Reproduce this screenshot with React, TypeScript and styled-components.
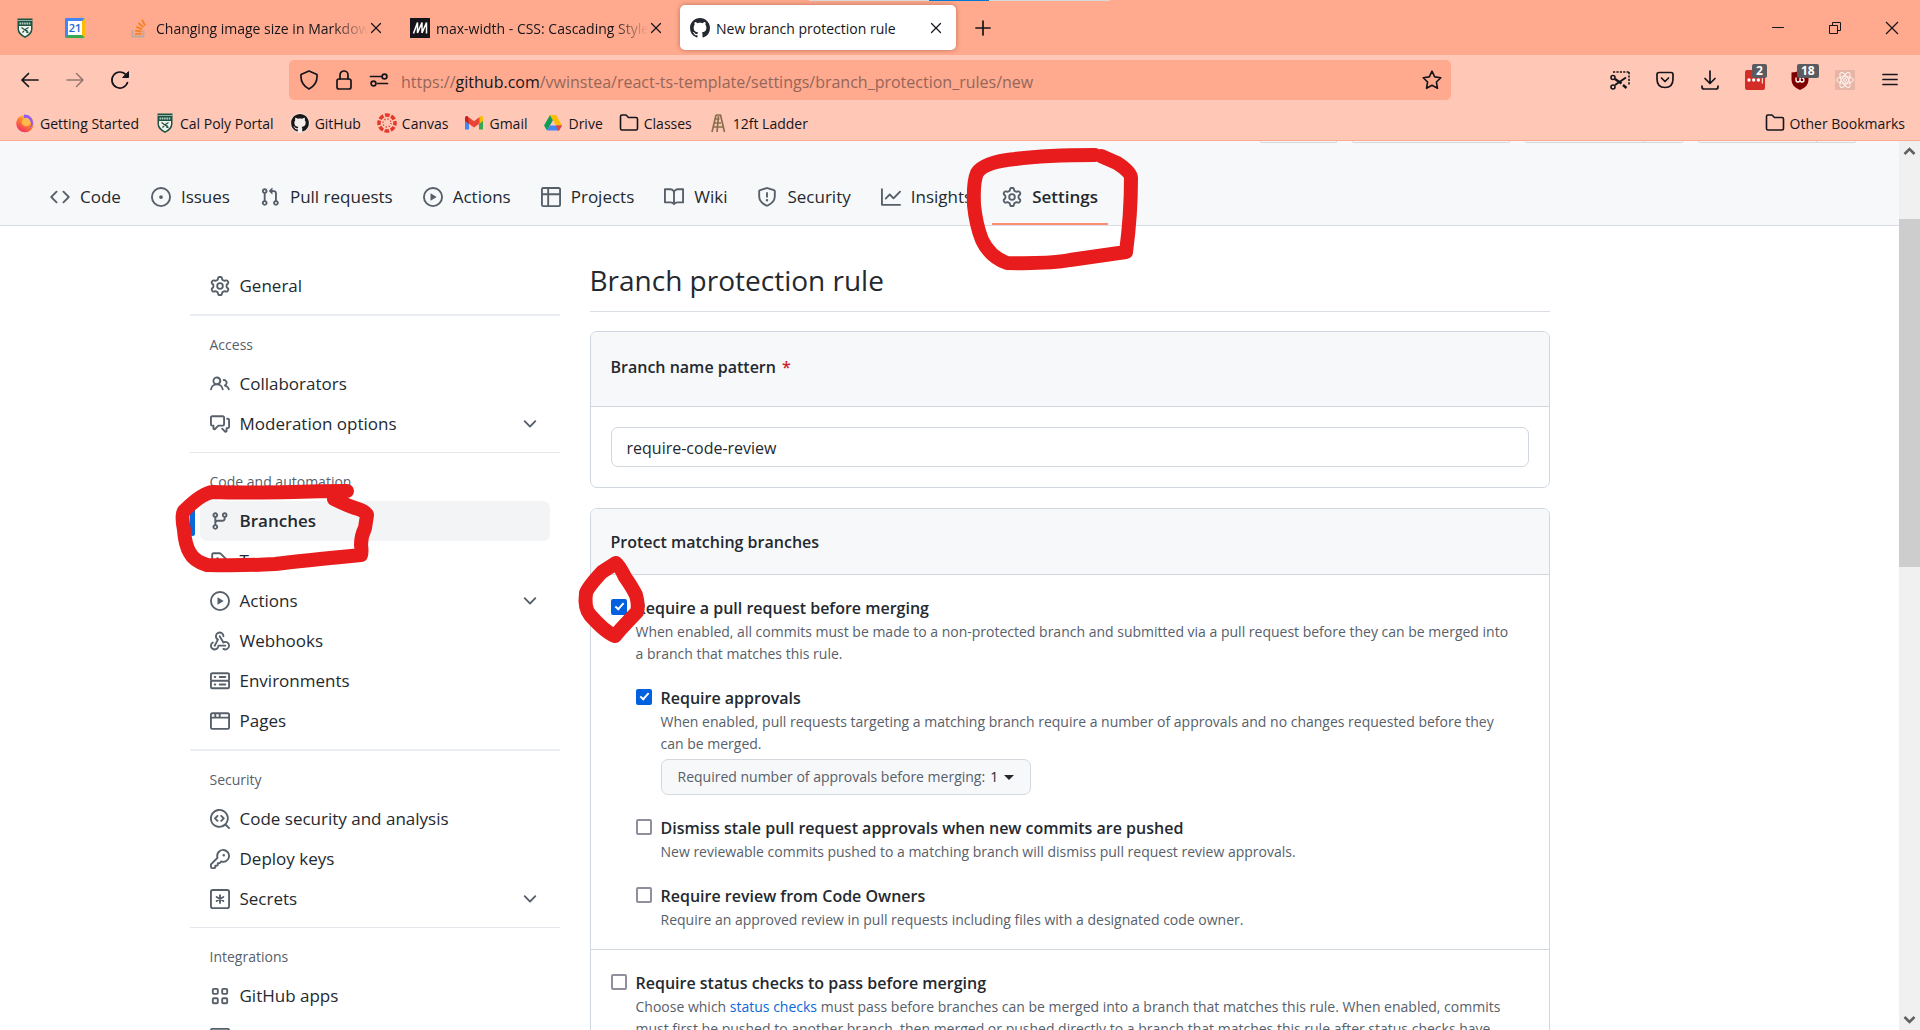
import React from "react";
import styled, { createGlobalStyle, css } from "styled-components";

const GlobalStyle = createGlobalStyle`
  *, *::before, *::after { box-sizing: border-box; }
  body { margin: 0; background: #fff; }
  body, button, input, select {
    font-family: "Open Sans", "Noto Sans", sans-serif;
  }
  a { color: inherit; text-decoration: none; }
  button { border: 0; padding: 0; background: none; color: inherit; }
  svg { display: block; flex: none; }
`;

/* ---------- octicons ---------- */

const octicons: Record<string, string> = {
  code: "m11.28 3.22 4.25 4.25a.75.75 0 0 1 0 1.06l-4.25 4.25a.749.749 0 0 1-1.275-.326.749.749 0 0 1 .215-.734L13.94 8l-3.72-3.72a.749.749 0 0 1 .326-1.275.749.749 0 0 1 .734.215Zm-6.56 0a.751.751 0 0 1 1.042.018.751.751 0 0 1 .018 1.042L2.06 8l3.72 3.72a.749.749 0 0 1-.326 1.275.749.749 0 0 1-.734-.215L.47 8.53a.75.75 0 0 1 0-1.06Z",
  issue: "M8 9.5a1.5 1.5 0 1 0 0-3 1.5 1.5 0 0 0 0 3ZM8 0a8 8 0 1 1 0 16A8 8 0 0 1 8 0ZM1.5 8a6.5 6.5 0 1 0 13 0 6.5 6.5 0 0 0-13 0Z",
  pull: "M1.5 3.25a2.25 2.25 0 1 1 3 2.122v5.256a2.251 2.251 0 1 1-1.5 0V5.372A2.25 2.25 0 0 1 1.5 3.25Zm5.677-.177L9.573.677A.25.25 0 0 1 10 .854V2.5h1A2.5 2.5 0 0 1 13.5 5v5.628a2.251 2.251 0 1 1-1.5 0V5a1 1 0 0 0-1-1h-1v1.646a.25.25 0 0 1-.427.177L7.177 3.427a.25.25 0 0 1 0-.354ZM3.75 2.5a.75.75 0 1 0 0 1.5.75.75 0 0 0 0-1.5Zm0 9.5a.75.75 0 1 0 0 1.5.75.75 0 0 0 0-1.5Zm8.25.75a.75.75 0 1 0 1.5 0 .75.75 0 0 0-1.5 0Z",
  play: "M8 0a8 8 0 1 1 0 16A8 8 0 0 1 8 0ZM1.5 8a6.5 6.5 0 1 0 13 0 6.5 6.5 0 0 0-13 0Zm4.879-2.773 4.264 2.559a.25.25 0 0 1 0 .428l-4.264 2.559A.25.25 0 0 1 6 10.559V5.442a.25.25 0 0 1 .379-.215Z",
  table: "M0 1.75C0 .784.784 0 1.75 0h12.5C15.216 0 16 .784 16 1.75v12.5A1.75 1.75 0 0 1 14.25 16H1.75A1.75 1.75 0 0 1 0 14.25ZM6.5 6.5v8h7.75a.25.25 0 0 0 .25-.25V6.5Zm8-1.5V1.75a.25.25 0 0 0-.25-.25H6.5V5Zm-13 1.5v7.75c0 .138.112.25.25.25H5v-8ZM5 5V1.5H1.75a.25.25 0 0 0-.25.25V5Z",
  book: "M0 1.75A.75.75 0 0 1 .75 1h4.253c1.227 0 2.317.59 3 1.501A3.743 3.743 0 0 1 11.006 1h4.245a.75.75 0 0 1 .75.75v10.5a.75.75 0 0 1-.75.75h-4.507a2.25 2.25 0 0 0-1.591.659l-.622.621a.75.75 0 0 1-1.06 0l-.622-.621A2.25 2.25 0 0 0 5.258 13H.75a.75.75 0 0 1-.75-.75Zm7.251 10.324.004-5.073-.002-2.253A2.25 2.25 0 0 0 5.003 2.5H1.5v9h3.757a3.75 3.75 0 0 1 1.994.574ZM8.755 4.75l-.004 7.322a3.752 3.752 0 0 1 1.992-.572H14.5v-9h-3.495a2.25 2.25 0 0 0-2.25 2.25Z",
  shield: "M7.467.133a1.748 1.748 0 0 1 1.066 0l5.25 1.68A1.75 1.75 0 0 1 15 3.48V7c0 1.566-.32 3.182-1.303 4.682-.983 1.498-2.585 2.813-5.032 3.855a1.697 1.697 0 0 1-1.33 0c-2.447-1.042-4.049-2.357-5.032-3.855C1.32 10.182 1 8.566 1 7V3.48a1.75 1.75 0 0 1 1.217-1.667Zm.61 1.429a.25.25 0 0 0-.153 0l-5.25 1.68a.25.25 0 0 0-.174.238V7c0 1.358.275 2.666 1.057 3.86.784 1.194 2.121 2.34 4.366 3.297a.196.196 0 0 0 .154 0c2.245-.956 3.582-2.104 4.366-3.298C13.225 9.666 13.5 8.36 13.5 7V3.48a.251.251 0 0 0-.174-.237l-5.25-1.68ZM8.75 4.75v3a.75.75 0 0 1-1.5 0v-3a.75.75 0 0 1 1.5 0ZM9 10.5a1 1 0 1 1-2 0 1 1 0 0 1 2 0Z",
  graph: "M1.5 1.75V13.5h13.75a.75.75 0 0 1 0 1.5H.75a.75.75 0 0 1-.75-.75V1.75a.75.75 0 0 1 1.5 0Zm14.28 2.53-5.25 5.25a.75.75 0 0 1-1.06 0L7 7.06 4.28 9.78a.751.751 0 0 1-1.042-.018.751.751 0 0 1-.018-1.042l3.25-3.25a.75.75 0 0 1 1.06 0L10 7.94l4.72-4.72a.751.751 0 0 1 1.042.018.751.751 0 0 1 .018 1.042Z",
  gear: "M8 0a8.2 8.2 0 0 1 .701.031C9.444.095 9.99.645 10.16 1.29l.288 1.107c.018.066.079.158.212.224.231.114.454.243.668.386.123.082.233.09.299.071l1.103-.303c.644-.176 1.392.021 1.82.63.27.385.506.792.704 1.218.315.675.111 1.422-.364 1.891l-.814.806c-.049.048-.098.147-.088.294.016.257.016.515 0 .772-.01.147.038.246.088.294l.814.806c.475.469.679 1.216.364 1.891a7.977 7.977 0 0 1-.704 1.217c-.428.61-1.176.807-1.82.63l-1.102-.302c-.067-.019-.177-.011-.3.071a5.909 5.909 0 0 1-.668.386c-.133.066-.194.158-.211.224l-.29 1.106c-.168.646-.715 1.196-1.458 1.26a8.006 8.006 0 0 1-1.402 0c-.743-.064-1.289-.614-1.458-1.26l-.289-1.106c-.018-.066-.079-.158-.212-.224a5.738 5.738 0 0 1-.668-.386c-.123-.082-.233-.09-.299-.071l-1.103.303c-.644.176-1.392-.021-1.82-.63a8.12 8.12 0 0 1-.704-1.218c-.315-.675-.111-1.422.363-1.891l.815-.806c.05-.048.098-.147.088-.294a6.214 6.214 0 0 1 0-.772c.01-.147-.038-.246-.088-.294l-.815-.806C.635 6.045.431 5.298.746 4.623a7.92 7.92 0 0 1 .704-1.217c.428-.61 1.176-.807 1.82-.63l1.102.302c.067.019.177.011.3-.071.214-.143.437-.272.668-.386.133-.066.194-.158.211-.224l.29-1.106C6.009.645 6.556.095 7.299.03 7.53.01 7.764 0 8 0Zm-.571 1.525c-.036.003-.108.036-.137.146l-.289 1.105c-.147.561-.549.967-.998 1.189-.173.086-.34.183-.5.29-.417.278-.97.423-1.529.27l-1.103-.303c-.109-.03-.175.016-.195.045-.22.312-.412.644-.573.99-.014.031-.021.11.059.19l.815.806c.411.406.562.957.53 1.456a4.709 4.709 0 0 0 0 .582c.032.499-.119 1.05-.53 1.456l-.815.806c-.081.08-.073.159-.059.19.162.346.353.677.573.989.02.03.085.076.195.046l1.102-.303c.56-.153 1.113-.008 1.53.27.161.107.328.204.501.29.447.222.85.629.997 1.189l.289 1.105c.029.109.101.143.137.146a6.6 6.6 0 0 0 1.142 0c.036-.003.108-.036.137-.146l.289-1.105c.147-.561.549-.967.998-1.189.173-.086.34-.183.5-.29.417-.278.97-.423 1.529-.27l1.103.303c.109.029.175-.016.195-.045.22-.313.411-.644.573-.99.014-.031.021-.11-.059-.19l-.815-.806c-.411-.406-.562-.957-.53-1.456a4.709 4.709 0 0 0 0-.582c-.032-.499.119-1.05.53-1.456l.815-.806c.081-.08.073-.159.059-.19a6.464 6.464 0 0 0-.573-.989c-.02-.03-.085-.076-.195-.046l-1.102.303c-.56.153-1.113.008-1.53-.27a4.44 4.44 0 0 0-.501-.29c-.447-.222-.85-.629-.997-1.189l-.289-1.105c-.029-.11-.101-.143-.137-.146a6.6 6.6 0 0 0-1.142 0ZM11 8a3 3 0 1 1-6 0 3 3 0 0 1 6 0ZM9.5 8a1.5 1.5 0 1 0-3.001.001A1.5 1.5 0 0 0 9.5 8Z",
  people: "M2 5.5a3.5 3.5 0 1 1 5.898 2.549 5.508 5.508 0 0 1 3.034 4.084.75.75 0 1 1-1.482.235 4 4 0 0 0-7.9 0 .75.75 0 0 1-1.482-.236A5.507 5.507 0 0 1 3.102 8.05 3.493 3.493 0 0 1 2 5.5ZM11 4a3.001 3.001 0 0 1 2.22 5.018 5.01 5.01 0 0 1 2.56 3.012.749.749 0 0 1-.885.954.752.752 0 0 1-.549-.514 3.507 3.507 0 0 0-2.522-2.372.75.75 0 0 1-.574-.73v-.352a.75.75 0 0 1 .416-.672A1.5 1.5 0 0 0 11 5.5.75.75 0 0 1 11 4Zm-5.5-.5a2 2 0 1 0-.001 3.999A2 2 0 0 0 5.5 3.5Z",
  discussion: "M1.75 1h8.5c.966 0 1.75.784 1.75 1.75v5.5A1.75 1.75 0 0 1 10.25 10H7.061l-2.574 2.573A1.458 1.458 0 0 1 2 11.543V10h-.25A1.75 1.75 0 0 1 0 8.25v-5.5C0 1.784.784 1 1.75 1ZM1.5 2.75v5.5c0 .138.112.25.25.25h1a.75.75 0 0 1 .75.75v2.19l2.72-2.72a.749.749 0 0 1 .53-.22h3.5a.25.25 0 0 0 .25-.25v-5.5a.25.25 0 0 0-.25-.25h-8.5a.25.25 0 0 0-.25.25Zm13 2a.25.25 0 0 0-.25-.25h-.5a.75.75 0 0 1 0-1.5h.5c.966 0 1.75.784 1.75 1.75v5.5A1.75 1.75 0 0 1 14.25 12H14v1.543a1.458 1.458 0 0 1-2.487 1.03L9.22 12.28a.749.749 0 0 1 .326-1.275.749.749 0 0 1 .734.215l2.22 2.22v-2.19a.75.75 0 0 1 .75-.75h1a.25.25 0 0 0 .25-.25Z",
  branch: "M9.5 3.25a2.25 2.25 0 1 1 3 2.122V6A2.5 2.5 0 0 1 10 8.5H6a1 1 0 0 0-1 1v1.128a2.251 2.251 0 1 1-1.5 0V5.372a2.25 2.25 0 1 1 1.5 0v1.836A2.493 2.493 0 0 1 6 7h4a1 1 0 0 0 1-1v-.628A2.25 2.25 0 0 1 9.5 3.25Zm-6 0a.75.75 0 1 0 1.5 0 .75.75 0 0 0-1.5 0Zm8.25-.75a.75.75 0 1 0 0 1.5.75.75 0 0 0 0-1.5ZM4.25 12a.75.75 0 1 0 0 1.5.75.75 0 0 0 0-1.5Z",
  tag: "M1 7.775V2.75C1 1.784 1.784 1 2.75 1h5.025c.464 0 .91.184 1.238.513l6.25 6.25a1.75 1.75 0 0 1 0 2.474l-5.026 5.026a1.75 1.75 0 0 1-2.474 0l-6.25-6.25A1.752 1.752 0 0 1 1 7.775Zm1.5 0c0 .066.026.13.073.177l6.25 6.25a.25.25 0 0 0 .354 0l5.025-5.025a.25.25 0 0 0 0-.354l-6.25-6.25a.25.25 0 0 0-.177-.073H2.75a.25.25 0 0 0-.25.25ZM6 5a1 1 0 1 1 0 2 1 1 0 0 1 0-2Z",
  webhook: "M5.5 4.25a2.25 2.25 0 0 1 4.5 0 .75.75 0 0 0 1.5 0 3.75 3.75 0 1 0-6.14 2.889l-2.272 4.258a.75.75 0 0 0 1.324.706L7 7.25a.75.75 0 0 0-.309-1.015A2.25 2.25 0 0 1 5.5 4.25Z M7.364 3.607a.75.75 0 0 1 1.03.257l2.608 4.349a3.75 3.75 0 1 1-.628 6.785.75.75 0 0 1 .752-1.299 2.25 2.25 0 1 0-.033-3.88.75.75 0 0 1-1.03-.256L7.107 4.636a.75.75 0 0 1 .257-1.03Z M2.9 8.776A.75.75 0 0 1 2.625 9.8 2.25 2.25 0 1 0 6 11.75a.75.75 0 0 1 .75-.751h5.5a.75.75 0 0 1 0 1.5H7.425a3.751 3.751 0 1 1-5.55-3.998.75.75 0 0 1 1.024.274Z",
  server: "M1.75 1h12.5c.966 0 1.75.784 1.75 1.75v4c0 .372-.116.717-.314 1 .198.283.314.628.314 1v4a1.75 1.75 0 0 1-1.75 1.75H1.75A1.75 1.75 0 0 1 0 12.75v-4c0-.358.109-.707.314-1a1.739 1.739 0 0 1-.314-1v-4C0 1.784.784 1 1.75 1ZM1.5 2.75v4c0 .138.112.25.25.25h12.5a.25.25 0 0 0 .25-.25v-4a.25.25 0 0 0-.25-.25H1.75a.25.25 0 0 0-.25.25Zm.25 5.75a.25.25 0 0 0-.25.25v4c0 .138.112.25.25.25h12.5a.25.25 0 0 0 .25-.25v-4a.25.25 0 0 0-.25-.25ZM7 4.75A.75.75 0 0 1 7.75 4h4.5a.75.75 0 0 1 0 1.5h-4.5A.75.75 0 0 1 7 4.75ZM7.75 10h4.5a.75.75 0 0 1 0 1.5h-4.5a.75.75 0 0 1 0-1.5ZM3 4.75A.75.75 0 0 1 3.75 4h.5a.75.75 0 0 1 0 1.5h-.5A.75.75 0 0 1 3 4.75ZM3.75 10h.5a.75.75 0 0 1 0 1.5h-.5a.75.75 0 0 1 0-1.5Z",
  browser: "M0 2.75C0 1.784.784 1 1.75 1h12.5c.966 0 1.75.784 1.75 1.75v10.5A1.75 1.75 0 0 1 14.25 15H1.75A1.75 1.75 0 0 1 0 13.25ZM14.5 6h-13v7.25c0 .138.112.25.25.25h12.5a.25.25 0 0 0 .25-.25Zm-6-3.5v2h6V2.75a.25.25 0 0 0-.25-.25ZM5 2.5v2h2v-2Zm-3.25 0a.25.25 0 0 0-.25.25V4.5h2v-2Z",
  codescan: "M8.47 4.97a.75.75 0 0 0 0 1.06L9.94 7.5 8.47 8.97a.75.75 0 1 0 1.06 1.06l2-2a.75.75 0 0 0 0-1.06l-2-2a.75.75 0 0 0-1.06 0ZM6.53 6.03a.75.75 0 0 0-1.06-1.06l-2 2a.75.75 0 0 0 0 1.06l2 2a.75.75 0 1 0 1.06-1.06L5.06 7.5l1.47-1.47Z M12.246 13.307a7.501 7.501 0 1 1 1.06-1.06l2.474 2.473a.749.749 0 0 1-.326 1.275.749.749 0 0 1-.734-.215ZM1.5 7.5a6.002 6.002 0 0 0 3.608 5.504 6.002 6.002 0 0 0 6.486-1.117.748.748 0 0 1 .292-.293A6 6 0 1 0 1.5 7.5Z",
  key: "M10.5 0a5.499 5.499 0 1 1-1.288 10.848l-.932.932a.749.749 0 0 1-.53.22H7v.75a.749.749 0 0 1-.22.53l-.5.5a.749.749 0 0 1-.53.22H5v.75a.749.749 0 0 1-.22.53l-.5.5a.749.749 0 0 1-.53.22h-2A1.75 1.75 0 0 1 0 14.25v-2c0-.199.079-.389.22-.53l4.932-4.932A5.5 5.5 0 0 1 10.5 0Zm-4 5.5c-.001.431.069.86.205 1.269a.75.75 0 0 1-.181.768L1.5 12.56v1.69c0 .138.112.25.25.25h1.69l.06-.06v-1.19a.75.75 0 0 1 .75-.75h1.19l.06-.06v-1.19a.75.75 0 0 1 .75-.75h1.19l1.023-1.025a.75.75 0 0 1 .768-.18A4 4 0 1 0 6.5 5.5ZM11 6a1 1 0 1 1 0-2 1 1 0 0 1 0 2Z",
  chevron: "M12.78 5.22a.749.749 0 0 1 0 1.06l-4.25 4.25a.749.749 0 0 1-1.06 0L3.22 6.28a.749.749 0 1 1 1.06-1.06L8 8.939l3.72-3.719a.749.749 0 0 1 1.06 0Z",
  github: "M8 0c4.42 0 8 3.58 8 8a8.013 8.013 0 0 1-5.45 7.59c-.4.08-.55-.17-.55-.38 0-.27.01-1.13.01-2.2 0-.75-.25-1.23-.54-1.48 1.78-.2 3.65-.88 3.65-3.95 0-.88-.31-1.59-.82-2.15.08-.2.36-1.02-.08-2.12 0 0-.67-.22-2.2.82-.64-.18-1.32-.27-2-.27-.68 0-1.36.09-2 .27-1.53-1.03-2.2-.82-2.2-.82-.44 1.1-.16 1.92-.08 2.12-.51.56-.82 1.28-.82 2.15 0 3.06 1.86 3.75 3.64 3.95-.23.2-.44.55-.51 1.07-.46.21-1.61.55-2.33-.66-.15-.24-.6-.83-1.23-.82-.67.01-.27.38.01.53.34.19.73.9.82 1.13.16.45.68 1.31 2.69.94 0 .67.01 1.3.01 1.49 0 .21-.15.45-.55.38A7.995 7.995 0 0 1 0 8c0-4.42 3.58-8 8-8Z",
};

function Octicon({ name, fill = "#57606a" }: { name: string; fill?: string }) {
  if (name === "asterisk")
    return (
      <svg width="20" height="20" viewBox="0 0 16 16" fill="none" stroke={fill} strokeWidth="1.5" strokeLinecap="round">
        <rect x=".75" y=".75" width="14.5" height="14.5" rx="1.5" />
        <path d="M8 4.9v6.2M5.3 6.4l5.4 3.2M10.7 6.4 5.3 9.6" />
      </svg>
    );
  if (name === "apps")
    return (
      <svg width="20" height="20" viewBox="0 0 16 16" fill="none" stroke={fill} strokeWidth="1.5">
        <rect x="2.25" y="2.25" width="4" height="4" rx=".8" />
        <rect x="9.75" y="2.25" width="4" height="4" rx=".8" />
        <rect x="2.25" y="9.75" width="4" height="4" rx=".8" />
        <rect x="9.75" y="9.75" width="4" height="4" rx=".8" />
      </svg>
    );
  if (name === "mail")
    return (
      <svg width="20" height="20" viewBox="0 0 16 16" fill="none" stroke={fill} strokeWidth="1.5">
        <rect x=".75" y="2.25" width="14.5" height="11.5" rx="1" />
        <path d="m1 5 7 4 7-4" />
      </svg>
    );
  return (
    <svg width="20" height="20" viewBox="0 0 16 16" fill={fill} fillRule="evenodd">
      <path d={octicons[name]} />
    </svg>
  );
}

/* ---------- browser icons ---------- */

const ink = "#15141a";
const line = { fill: "none", stroke: ink, strokeWidth: 1.7, strokeLinecap: "round", strokeLinejoin: "round" } as const;

const CalPoly = () => (
  <svg width="20" height="20" viewBox="0 0 20 20">
    <path d="M2.500.5h15V11q0 5.500-7.500 9Q2.500 16.500 2.500 11Z" fill="#1d5343" />
    <path d="M2.500 2.500h15" stroke="#c9dcd2" strokeWidth=".7" />
    <path d="M4.500 5.500h11" stroke="#b5cdc1" strokeWidth="1.800" strokeDasharray="1.600 .7" />
    <path d="M4 8h12v3.500q-.5 3.700-6 6.700-5.500-3-6-6.700Z" fill="#f2f5ee" />
    <path d="m6.500 9.500 7 5M13.500 9.500l-4 2.500M9 13l-1.500 1.500M12 12v3" stroke="#1d5343" strokeWidth="1.300" />
  </svg>
);

const CalendarTile = styled.span`
  display: grid;
  place-items: center;
  width: 20px;
  height: 20px;
  background: #fff;
  border: 3px solid #4285f4;
  border-right-color: #fbbc04;
  border-bottom-color: #34a853;
  border-radius: 2px;
  color: #1967d2;
  font-size: 11px;
  line-height: 14px;
  font-weight: 600;
`;

const StackOverflow = () => (
  <svg width="20" height="20" viewBox="0 0 20 20" fill="none" strokeWidth="1.800">
    <path d="M2.500 12v6.500h11V12" stroke="#bcaaa0" />
    <path d="M5 15.800h6.500M5.200 12.700l6.400.8M6.200 8.800l6 2.300M8.300 5l5.200 4M12 1.800l3.200 5.800" stroke="#f48024" />
  </svg>
);

const Mdn = () => (
  <svg width="20" height="20" viewBox="0 0 20 20">
    <path d="M0 0h20v20H0z" fill="#15141a" />
    <path d="m3.500 15.500 4-11v10.500l4.500-10.500v10.500M12 15 16.500 4.500v11" stroke="#fff" strokeWidth="1.500" fill="none" />
  </svg>
);

const GithubDot = () => (
  <svg width="20" height="20" viewBox="-1 -1 18 18">
    <circle cx="8" cy="8" r="8.700" fill="#f4efed" />
    <path d={octicons.github} fill="#191717" />
  </svg>
);

const Firefox = () => (
  <svg width="20" height="20" viewBox="0 0 20 20">
    <defs>
      <linearGradient id="fx" x1=".8" y1="0" x2=".2" y2="1">
        <stop offset="0" stopColor="#ffe14d" />
        <stop offset=".5" stopColor="#ff7a2f" />
        <stop offset="1" stopColor="#f0246e" />
      </linearGradient>
    </defs>
    <circle cx="10" cy="10.500" r="8.800" fill="url(#fx)" />
    <path d="M9 1.500c5 0 9 3 9 8.500 0 3-2 5-4.500 5.500 2-1 3-3 2.500-5.500C15.500 6.500 12 5 9 5Z" fill="#9059ff" />
    <circle cx="11" cy="9" r="4.300" fill="#ffb84d" />
  </svg>
);

const CanvasIcon = () => (
  <svg width="20" height="20" viewBox="0 0 20 20" fill="none" stroke="#e4392b">
    <circle cx="10" cy="10" r="8" strokeWidth="3.600" strokeDasharray="4.700 1.583" strokeDashoffset="2.300" />
    <circle cx="10" cy="10" r="4" strokeWidth="1.400" strokeDasharray="1.200 1.942" />
  </svg>
);

const Gmail = () => (
  <svg width="20" height="20" viewBox="0 0 20 20">
    <path d="M1 5v11.500h4V9Z" fill="#4285f4" />
    <path d="M19 5v11.500h-4V9Z" fill="#34a853" />
    <path d="M15 5.500V11l4-3V5c0-2-2-2.500-3-1.500Z" fill="#fbbc04" />
    <path d="M5 5.500V11L1 8V5c0-2 2-2.500 3-1.500Z" fill="#c5221f" />
    <path d="M4.500 4 10 8.200 15.500 4v6.500L10 14.500l-5.500-4Z" fill="#ea4335" />
  </svg>
);

const Drive = () => (
  <svg width="20" height="20" viewBox="0 0 20 20">
    <path d="M7 2 1 12.500 4 17.500 10 7Z" fill="#0f9d58" />
    <path d="M7 2h6l6 10.500h-6Z" fill="#fbbc04" />
    <path d="M7 12.500h12l-3 5H4Z" fill="#4285f4" />
    <path d="M16 17.500h-1.500L13 12.500h6Z" fill="#ea4335" />
  </svg>
);

const Folder = () => (
  <svg width="20" height="20" viewBox="0 0 20 20" {...line} strokeWidth="1.600">
    <path d="M1.500 15.500v-12Q1.500 2 3 2h4l2.500 2.500H17q1.500 0 1.500 1.500v9.500q0 1.500-1.500 1.500H3q-1.500 0-1.500-1.500Z" />
  </svg>
);

const Ladder = () => (
  <svg width="20" height="20" viewBox="0 0 20 20" fill="none" stroke="#8a6f4d" strokeWidth="1.700">
    <path d="M8 2 4 19M12.500 2 16.500 19M8 2h5M10.500 3 9 19M7 6h4.500M6 10h7M5.500 14h9" />
  </svg>
);

const icons = {
  back: <svg width="20" height="20" viewBox="0 0 20 20" {...line}><path d="M18 10H2M8.500 3.500 2 10l6.500 6.500" /></svg>,
  forward: <svg width="20" height="20" viewBox="0 0 20 20" {...line} strokeWidth="1.500" opacity=".45"><path d="M2 10h16M11.500 3.500 18 10l-6.500 6.500" /></svg>,
  reload: (
    <svg width="20" height="20" viewBox="0 0 20 20" {...line}>
      <path d="M17.500 12.500A8 8 0 1 1 16 4.800" />
      <path d="M18.500 2v5.500H13Z" fill={ink} strokeWidth="1" />
    </svg>
  ),
  shield: <svg width="20" height="20" viewBox="0 0 20 20" {...line}><path d="M10 1 18 4.500v2.500c0 5-2.500 9-8 12-5.500-3-8-7-8-12V4.500Z" /></svg>,
  lock: <svg width="20" height="20" viewBox="0 0 20 20" {...line}><rect x="3" y="9" width="14" height="10" rx="2" /><path d="M6 9V5a4 4 0 0 1 8 0v4" /></svg>,
  perms: <svg width="20" height="20" viewBox="0 0 20 20" {...line}><path d="M1.500 6.500h11M8.500 13.500h10" /><circle cx="15.500" cy="6.500" r="2.400" /><circle cx="4.500" cy="13.500" r="2.400" /></svg>,
  star: <svg width="20" height="20" viewBox="0 0 20 20" {...line} strokeWidth="1.600"><path d="m10 1.200 2.700 5.700 6.100.8-4.400 4.300 1.100 6.300-5.500-3-5.500 3 1.100-6.300L1.200 7.700l6.100-.8Z" /></svg>,
  scissors: (
    <svg width="20" height="20" viewBox="0 0 20 20" fill="none" stroke={ink} strokeWidth="1.600">
      <path d="M3 2h16M19 2v13" strokeDasharray="2.200 1.200" />
      <path d="m5 9 6.500 4.500M13 15l3.500 3" strokeWidth="2.400" />
      <path d="M16 7.500 5 15" strokeWidth="2" />
      <circle cx="3" cy="7.500" r="2" />
      <circle cx="3" cy="17" r="2" />
    </svg>
  ),
  pocket: <svg width="20" height="20" viewBox="0 0 20 20" {...line}><path d="M4 2.500h12q2 0 2 2V9q0 8.500-8 8.500T2 9V4.500q0-2 2-2Z" /><path d="m6.500 8 3.500 3.500L13.500 8" /></svg>,
  download: <svg width="20" height="20" viewBox="0 0 20 20" {...line}><path d="M10 1v12M5 8.500l5 5 5-5M2 16v1q0 2 2 2h12q2 0 2-2v-1" /></svg>,
  lastpass: (
    <svg width="20" height="20" viewBox="0 0 20 20">
      <rect width="20" height="20" rx="2" fill="#d32d27" />
      <g fill="#fff"><circle cx="4" cy="10" r="1.700" /><circle cx="8.700" cy="10" r="1.700" /><circle cx="13.400" cy="10" r="1.700" /><path d="M16.800 7h1v6.500h-1z" /></g>
    </svg>
  ),
  ublock: (
    <svg width="20" height="20" viewBox="0 0 20 20">
      <path d="M10 0q4 2.500 8.500 2.500V10q0 6.500-8.500 10-8.500-3.500-8.500-10V2.500Q6 2.500 10 0Z" fill="#800000" />
      <path d="M6 7.500V10q0 2 2 2t2-2V7.500M10 10q0 2 2 2t2-2-2-2.500-2 2.500" fill="none" stroke="#fff" strokeWidth="1.300" />
    </svg>
  ),
  react: (
    <svg width="20" height="20" viewBox="0 0 20 20">
      <rect width="20" height="20" rx="1" fill="#e6b5a5" />
      <g fill="none" stroke="#fff4ef" strokeWidth="1">
        <ellipse cx="10" cy="10" rx="8.500" ry="3.300" />
        <ellipse cx="10" cy="10" rx="8.500" ry="3.300" transform="rotate(60 10 10)" />
        <ellipse cx="10" cy="10" rx="8.500" ry="3.300" transform="rotate(120 10 10)" />
        <circle cx="10" cy="10" r="1.500" />
      </g>
    </svg>
  ),
  menu: <svg width="20" height="20" viewBox="0 0 20 20" {...line}><path d="M3 4.500h14M3 9.500h14M3 14.500h14" /></svg>,
  plus: <svg width="20" height="20" viewBox="0 0 20 20" {...line}><path d="M10 3v14M3 10h14" /></svg>,
  close: <svg width="20" height="20" viewBox="0 0 20 20" {...line} strokeWidth="1.200"><path d="m5.500 5.500 9 9M14.500 5.500l-9 9" /></svg>,
  minimize: <svg width="20" height="20" viewBox="0 0 20 20" {...line} strokeWidth="1"><path d="M4.500 9.500h11" /></svg>,
  restore: <svg width="20" height="20" viewBox="0 0 20 20" fill="none" stroke={ink}><path d="M4.500 7.500h8v8h-8zM7.500 7.500v-3h8v8h-3" /></svg>,
  quit: <svg width="20" height="20" viewBox="0 0 20 20" fill="none" stroke={ink} strokeWidth="1.200"><path d="m4 4 12 12M16 4 4 16" /></svg>,
};

/* ---------- browser chrome ---------- */

const Window = styled.div`
  position: relative;
  display: flex;
  flex-direction: column;
  height: 100vh;
  overflow: hidden;
`;

const TabStrip = styled.header`
  display: flex;
  align-items: center;
  height: 55px;
  padding-right: 18px;
  background: #ffaa8e;
  color: ${ink};
`;

const PinnedTab = styled.button`
  display: grid;
  place-items: center;
  width: 50px;
  height: 45px;
`;

const TabList = styled.div`
  display: flex;
  gap: 4px;
  margin-left: 20px;
`;

const Tab = styled.div<{ $active?: boolean }>`
  display: flex;
  align-items: center;
  gap: 6px;
  width: 276px;
  height: 45px;
  padding: 0 10px;
  border-radius: 5px;
  ${(p) =>
    p.$active &&
    css`
      background: #fff;
      box-shadow: 0 0 5px rgba(120, 50, 30, 0.5);
    `}
`;

const TabTitle = styled.span<{ $fade?: boolean }>`
  flex: 1;
  min-width: 0;
  padding-top: 2px;
  overflow: hidden;
  white-space: nowrap;
  font-size: 14px;
  line-height: 20px;
  ${(p) =>
    p.$fade &&
    css`
      mask-image: linear-gradient(to left, transparent, #000 36px);
    `}
`;

const TabClose = styled.button`
  margin-left: -8px;
`;

const NewTab = styled.button`
  margin-left: 17px;
`;

const WindowControls = styled.div`
  display: flex;
  gap: 37px;
  margin-left: auto;
`;

const Toolbar = styled.div`
  display: flex;
  align-items: center;
  height: 50px;
  padding: 0 20px;
  background: #ffc8b6;
`;

const NavButtons = styled.div`
  display: flex;
  gap: 25px;
`;

const AddressBar = styled.form`
  display: flex;
  align-items: center;
  gap: 15px;
  flex: 1 1 0;
  max-width: 1162px;
  height: 40px;
  margin-left: 159px;
  padding: 0 9px 0 10px;
  background: #ffaa8e;
  border-radius: 5px;
`;

const Address = styled.a`
  flex: 1;
  margin-left: -3px;
  padding-top: 3px;
  overflow: hidden;
  white-space: nowrap;
  font-size: 16px;
  line-height: 24px;
  color: #94665a;
`;

const Host = styled.span`
  color: ${ink};
`;

const Extensions = styled.div`
  display: flex;
  gap: 25px;
  margin-left: auto;
`;

const ToolButton = styled.button`
  position: relative;
`;

const Badge = styled.span`
  position: absolute;
  left: 7px;
  bottom: 12px;
  padding: 0 4px;
  background: #5b5b5f;
  border-radius: 2px;
  color: #fff;
  font-size: 12px;
  line-height: 14px;
  font-weight: 700;
`;

const Bookmarks = styled.nav`
  display: flex;
  align-items: center;
  gap: 16px;
  height: 36px;
  padding: 0 15px;
  background: #ffc8b6;
  border-bottom: 1px solid #ffaa8e;
  color: ${ink};
`;

const Bookmark = styled.a<{ $last?: boolean }>`
  display: flex;
  align-items: center;
  gap: 5px;
  font-size: 14px;
  line-height: 20px;
  white-space: nowrap;
  ${(p) => p.$last && "margin-left: auto;"}
`;

const BookmarkName = styled.span`
  padding-top: 2px;
`;

const TopGrip = styled.div`
  position: absolute;
  top: 0;
  left: 809px;
  width: 301px;
  height: 1px;
  background: linear-gradient(to right, #d9d9d9 120px, #0078d7 120px, #0078d7 180px, #d9d9d9 180px);
`;

const Viewport = styled.div`
  display: flex;
  flex: 1;
  min-height: 0;
`;

const Page = styled.div`
  flex: 1;
  min-width: 0;
  overflow: hidden;
  color: #24292f;
`;

const Scrollbar = styled.div`
  display: flex;
  flex-direction: column;
  align-items: center;
  justify-content: space-between;
  width: 21px;
  padding: 0 0 2px;
  background: #f0f0f0;
`;

const Thumb = styled.div`
  width: 21px;
  height: 348px;
  margin: 58px 0 auto;
  background: #cdcdcd;
`;

/* ---------- repository header ---------- */

const RepoHeader = styled.header`
  background: #f6f8fa;
  border-bottom: 1px solid #d8dee4;
`;

const ActionStubs = styled.div`
  display: flex;
  justify-content: flex-end;
  gap: 15px;
  height: 2px;
  padding-right: 43px;
`;

const Stub = styled.div<{ $width: number; $split?: boolean }>`
  display: flex;
  justify-content: flex-end;
  width: ${(p) => p.$width}px;
  border: 1px solid #d5d8da;
  border-top: 0;
  border-radius: 0 0 6px 6px;
  &::after {
    content: "";
    width: ${(p) => (p.$split ? 39 : 0)}px;
    border-left: ${(p) => (p.$split ? 1 : 0)}px solid #d5d8da;
  }
`;

const RepoNav = styled.nav`
  display: flex;
  gap: 10px;
  padding: 22px 40px 0;
`;

const RepoTab = styled.a<{ $active?: boolean }>`
  display: flex;
  align-items: flex-start;
  gap: 10px;
  height: 60px;
  padding: 20px 10px 0;
  font-size: 17px;
  line-height: 24px;
  font-weight: ${(p) => (p.$active ? 600 : 400)};
  border-bottom: 2px solid ${(p) => (p.$active ? "#fd8c73" : "transparent")};
  svg { margin-top: 2px; }
`;

/* ---------- settings layout ---------- */

const Layout = styled.div`
  display: grid;
  grid-template-columns: 370px minmax(0, 960px);
  gap: 30px;
  max-width: 1600px;
  margin: 0 auto;
  padding: 32px 40px;
`;

const Sidebar = styled.nav`
  padding-top: 8px;
`;

const SideSection = styled.section`
  margin-top: 8px;
  border-top: 1px solid #e4e8ec;
  &:nth-of-type(odd) { border-top: 2px solid #eaeef2; }
`;

const SideHeading = styled.h2`
  margin: 0;
  padding: 19px 20px 9px;
  font-size: 14px;
  line-height: 20px;
  font-weight: 400;
  color: #57606a;
`;

const SideItem = styled.a<{ $active?: boolean }>`
  position: relative;
  display: flex;
  align-items: center;
  gap: 10px;
  height: 40px;
  margin: 0 10px;
  padding: 0 10px;
  border-radius: 7px;
  font-size: 17px;
  line-height: 24px;
  ${(p) =>
    p.$active &&
    css`
      background: #f3f4f6;
      font-weight: 600;
      &::before {
        content: "";
        position: absolute;
        left: -10px;
        top: 5px;
        width: 5px;
        height: 30px;
        border-radius: 7px;
        background: #0969da;
      }
    `}
  svg:nth-of-type(2) { margin-left: auto; }
`;

const PageTitle = styled.h1`
  margin: 0 0 19px;
  padding-bottom: 9px;
  border-bottom: 1px solid #d8dee4;
  font-size: 28px;
  line-height: 44px;
  font-weight: 400;
`;

const Box = styled.section`
  margin-bottom: 20px;
  border: 1px solid #d0d7de;
  border-radius: 7px;
`;

const BoxHeader = styled.div<{ $tall?: boolean }>`
  padding: ${(p) => (p.$tall ? "22px 20px 26px" : "20px 20px 19px")};
  background: #f6f8fa;
  border-bottom: 1px solid #d0d7de;
  border-radius: 6px 6px 0 0;
  font-size: 16px;
  line-height: 26px;
  font-weight: 600;
`;

const Required = styled.span`
  margin-left: 2px;
  color: #cf222e;
`;

const BoxTitle = styled.h2`
  margin: 0;
  font: inherit;
`;

const BoxBody = styled.div`
  padding: 20px;
`;

const TextInput = styled.input`
  display: block;
  width: 100%;
  height: 40px;
  padding: 2px 15px 0;
  border: 1px solid #d0d7de;
  border-radius: 7px;
  font-size: 16px;
  line-height: 24px;
  color: #24292f;
  outline: 0;
`;

const RuleGroup = styled.div`
  padding: 20px 20px 18px;
  & + & { border-top: 1px solid #d0d7de; }
`;

const Rule = styled.div`
  display: flex;
  align-items: flex-start;
  gap: 9px;
`;

const SubRules = styled.div`
  display: grid;
  gap: 20px;
  margin-top: 20px;
`;

const Checkbox = styled.input`
  appearance: none;
  flex: none;
  width: 16px;
  height: 16px;
  margin: 4px 0 0;
  border: 2px solid #8f8f9d;
  border-radius: 2px;
  background: #fff;
  &:checked {
    border-color: #0060df;
    background: #0060df;
  }
  &:checked::after {
    content: "";
    display: block;
    width: 5px;
    height: 9px;
    margin: 0 0 0 4px;
    border: solid #fff;
    border-width: 0 2px 2px 0;
    transform: rotate(42deg);
  }
`;

const RuleText = styled.div`
  flex: 1;
  min-width: 0;
`;

const RuleLabel = styled.label`
  display: block;
  font-size: 16px;
  line-height: 26px;
  font-weight: 600;
`;

const RuleNote = styled.p`
  margin: 0;
  padding-right: 16px;
  font-size: 14px;
  line-height: 22px;
  color: #57606a;
`;

const NoteLink = styled.a`
  color: #0969da;
`;

const ApprovalPicker = styled.label`
  display: inline-flex;
  align-items: center;
  gap: 5px;
  height: 36px;
  margin-top: 4px;
  padding: 0 16px;
  background: #f6f8fa;
  border: 1px solid #d5d9dd;
  border-radius: 7px;
  font-size: 14px;
  line-height: 24px;
  color: #57606a;
  vertical-align: top;
`;

const ApprovalCount = styled.select`
  appearance: none;
  border: 0;
  padding: 0;
  background: none;
  font-size: 14px;
  line-height: 24px;
  color: #24292f;
`;

const Markup = styled.svg`
  position: absolute;
  top: 0;
  left: 0;
  pointer-events: none;
`;

/* ---------- data ---------- */

const repoTabs: [string, string][] = [
  ["code", "Code"],
  ["issue", "Issues"],
  ["pull", "Pull requests"],
  ["play", "Actions"],
  ["table", "Projects"],
  ["book", "Wiki"],
  ["shield", "Security"],
  ["graph", "Insights"],
  ["gear", "Settings"],
];

const bookmarks: [React.ReactNode, string][] = [
  [<Firefox />, "Getting Started"],
  [<CalPoly />, "Cal Poly Portal"],
  [<GithubDot />, "GitHub"],
  [<CanvasIcon />, "Canvas"],
  [<Gmail />, "Gmail"],
  [<Drive />, "Drive"],
  [<Folder />, "Classes"],
  [<Ladder />, "12ft Ladder"],
];

type Item = { icon: string; text: string; menu?: boolean; active?: boolean };

const sections: { title: string; items: Item[] }[] = [
  {
    title: "Access",
    items: [
      { icon: "people", text: "Collaborators" },
      { icon: "discussion", text: "Moderation options", menu: true },
    ],
  },
  {
    title: "Code and automation",
    items: [
      { icon: "branch", text: "Branches", active: true },
      { icon: "tag", text: "Tags" },
      { icon: "play", text: "Actions", menu: true },
      { icon: "webhook", text: "Webhooks" },
      { icon: "server", text: "Environments" },
      { icon: "browser", text: "Pages" },
    ],
  },
  {
    title: "Security",
    items: [
      { icon: "codescan", text: "Code security and analysis" },
      { icon: "key", text: "Deploy keys" },
      { icon: "asterisk", text: "Secrets", menu: true },
    ],
  },
  {
    title: "Integrations",
    items: [
      { icon: "apps", text: "GitHub apps" },
      { icon: "mail", text: "Email notifications" },
    ],
  },
];

function SideLink({ icon, text, menu, active }: Item) {
  return (
    <SideItem href="#" $active={active}>
      <Octicon name={icon} />
      {text}
      {menu && <Octicon name="chevron" />}
    </SideItem>
  );
}

type RuleProps = {
  id: string;
  label: string;
  note: React.ReactNode;
  checked?: boolean;
  children?: React.ReactNode;
};

function RuleOption({ id, label, note, checked, children }: RuleProps) {
  return (
    <Rule>
      <Checkbox type="checkbox" id={id} defaultChecked={checked} />
      <RuleText>
        <RuleLabel htmlFor={id}>{label}</RuleLabel>
        <RuleNote>{note}</RuleNote>
        {children}
      </RuleText>
    </Rule>
  );
}

function BrowserChrome() {
  return (
    <>
      <TabStrip>
        <PinnedTab aria-label="Cal Poly Portal"><CalPoly /></PinnedTab>
        <PinnedTab aria-label="Calendar"><CalendarTile>21</CalendarTile></PinnedTab>
        <TabList>
          <Tab>
            <StackOverflow />
            <TabTitle $fade>Changing image size in Markdown</TabTitle>
            <TabClose aria-label="Close tab">{icons.close}</TabClose>
          </Tab>
          <Tab>
            <Mdn />
            <TabTitle $fade>max-width - CSS: Cascading Style Sheets</TabTitle>
            <TabClose aria-label="Close tab">{icons.close}</TabClose>
          </Tab>
          <Tab $active>
            <svg width="20" height="20" viewBox="0 0 16 16" fill="#24292f"><path d={octicons.github} /></svg>
            <TabTitle>New branch protection rule</TabTitle>
            <TabClose aria-label="Close tab">{icons.close}</TabClose>
          </Tab>
        </TabList>
        <NewTab aria-label="New tab">{icons.plus}</NewTab>
        <WindowControls>
          <button aria-label="Minimize">{icons.minimize}</button>
          <button aria-label="Restore">{icons.restore}</button>
          <button aria-label="Close">{icons.quit}</button>
        </WindowControls>
      </TabStrip>
      <Toolbar>
        <NavButtons>
          <button aria-label="Back">{icons.back}</button>
          <button aria-label="Forward">{icons.forward}</button>
          <button aria-label="Reload">{icons.reload}</button>
        </NavButtons>
        <AddressBar>
          {icons.shield}
          {icons.lock}
          {icons.perms}
          <Address href="#">
            https://<Host>github.com</Host>/vwinstea/react-ts-template/settings/branch_protection_rules/new
          </Address>
          {icons.star}
        </AddressBar>
        <Extensions>
          <ToolButton aria-label="Screenshot">{icons.scissors}</ToolButton>
          <ToolButton aria-label="Pocket">{icons.pocket}</ToolButton>
          <ToolButton aria-label="Downloads">{icons.download}</ToolButton>
          <ToolButton aria-label="Passwords">{icons.lastpass}<Badge>2</Badge></ToolButton>
          <ToolButton aria-label="Blocker">{icons.ublock}<Badge>18</Badge></ToolButton>
          <ToolButton aria-label="React tools">{icons.react}</ToolButton>
          <ToolButton aria-label="Menu">{icons.menu}</ToolButton>
        </Extensions>
      </Toolbar>
      <Bookmarks>
        {bookmarks.map(([icon, text]) => (
          <Bookmark href="#" key={text}>{icon}<BookmarkName>{text}</BookmarkName></Bookmark>
        ))}
        <Bookmark href="#" $last><Folder /><BookmarkName>Other Bookmarks</BookmarkName></Bookmark>
      </Bookmarks>
    </>
  );
}

function SettingsForm() {
  return (
    <main>
      <PageTitle>Branch protection rule</PageTitle>
      <Box>
        <BoxHeader $tall>
          <label htmlFor="pattern">Branch name pattern <Required>*</Required></label>
        </BoxHeader>
        <BoxBody>
          <TextInput id="pattern" type="text" defaultValue="require-code-review" />
        </BoxBody>
      </Box>
      <Box>
        <BoxHeader>
          <BoxTitle>Protect matching branches</BoxTitle>
        </BoxHeader>
        <RuleGroup>
          <RuleOption
            id="pull-request"
            checked
            label="Require a pull request before merging"
            note="When enabled, all commits must be made to a non-protected branch and submitted via a pull request before they can be merged into a branch that matches this rule."
          >
            <SubRules>
              <RuleOption
                id="approvals"
                checked
                label="Require approvals"
                note="When enabled, pull requests targeting a matching branch require a number of approvals and no changes requested before they can be merged."
              >
                <ApprovalPicker>
                  Required number of approvals before merging:
                  <ApprovalCount defaultValue="1">
                    {[1, 2, 3, 4, 5, 6].map((n) => <option key={n}>{n}</option>)}
                  </ApprovalCount>
                  <svg width="10" height="5" viewBox="0 0 10 5" fill="#24292f"><path d="M0 0h10L5 5Z" /></svg>
                </ApprovalPicker>
              </RuleOption>
              <RuleOption
                id="stale"
                label="Dismiss stale pull request approvals when new commits are pushed"
                note="New reviewable commits pushed to a matching branch will dismiss pull request review approvals."
              />
              <RuleOption
                id="owners"
                label="Require review from Code Owners"
                note="Require an approved review in pull requests including files with a designated code owner."
              />
            </SubRules>
          </RuleOption>
        </RuleGroup>
        <RuleGroup>
          <RuleOption
            id="status"
            label="Require status checks to pass before merging"
            note={
              <>
                Choose which <NoteLink href="#">status checks</NoteLink> must pass before branches can be merged into a
                branch that matches this rule. When enabled, commits must first be pushed to another branch, then merged
                or pushed directly to a branch that matches this rule after status checks have passed.
              </>
            }
          />
        </RuleGroup>
      </Box>
    </main>
  );
}

export default function App() {
  return (
    <Window>
      <GlobalStyle />
      <BrowserChrome />
      <TopGrip />
      <Viewport>
        <Page>
          <RepoHeader>
            <ActionStubs aria-hidden="true">
              <Stub $width={77} />
              <Stub $width={158} />
              <Stub $width={158} $split />
              <Stub $width={158} $split />
            </ActionStubs>
            <RepoNav>
              {repoTabs.map(([icon, text]) => (
                <RepoTab href="#" key={text} $active={text === "Settings"}>
                  <Octicon name={icon} />
                  {text}
                </RepoTab>
              ))}
            </RepoNav>
          </RepoHeader>
          <Layout>
            <Sidebar>
              <SideLink icon="gear" text="General" />
              {sections.map((s) => (
                <SideSection key={s.title}>
                  <SideHeading>{s.title}</SideHeading>
                  {s.items.map((item) => <SideLink key={item.text} {...item} />)}
                </SideSection>
              ))}
            </Sidebar>
            <SettingsForm />
          </Layout>
        </Page>
        <Scrollbar aria-hidden="true">
          <svg width="21" height="20" viewBox="0 0 21 20" fill="none" stroke="#606060" strokeWidth="2.500"><path d="m5.500 13 5-5 5 5" /></svg>
          <Thumb />
          <svg width="21" height="16" viewBox="0 0 21 16" fill="none" stroke="#606060" strokeWidth="2.500"><path d="m5.500 5 5 5 5-5" /></svg>
        </Scrollbar>
      </Viewport>
      <Markup width="1140" height="660" viewBox="0 0 1140 660" fill="none" stroke="#e81c1c" strokeWidth="14" strokeLinecap="round" strokeLinejoin="round" aria-hidden="true">
        <path d="M1095 155Q1045 155 1015 159Q984 162 977 173Q973 182 974 205Q976 225 982 240Q990 257 1007 263Q1050 264 1070 260L1126 252Q1131 215 1131 178Q1131 172 1117 163L1101 156" />
        <path d="M347 491Q320 491 293 492Q240 493 213 492Q202 493 184 511Q181 515 184 530Q185 545 190 553Q194 561 207 565Q240 566 275 564Q300 561 361 555Q362 551 361 545Q361 536 365 528L367 515Q366 511 355 508Q346 505 334 499" />
        <path d="M615 636Q605 632 590 615Q584 608 586 593Q588 587 602 572L616 563Q619 565 625 577Q632 587 636 595Q639 606 637 612Q632 617 620 630Z" />
      </Markup>
    </Window>
  );
}
